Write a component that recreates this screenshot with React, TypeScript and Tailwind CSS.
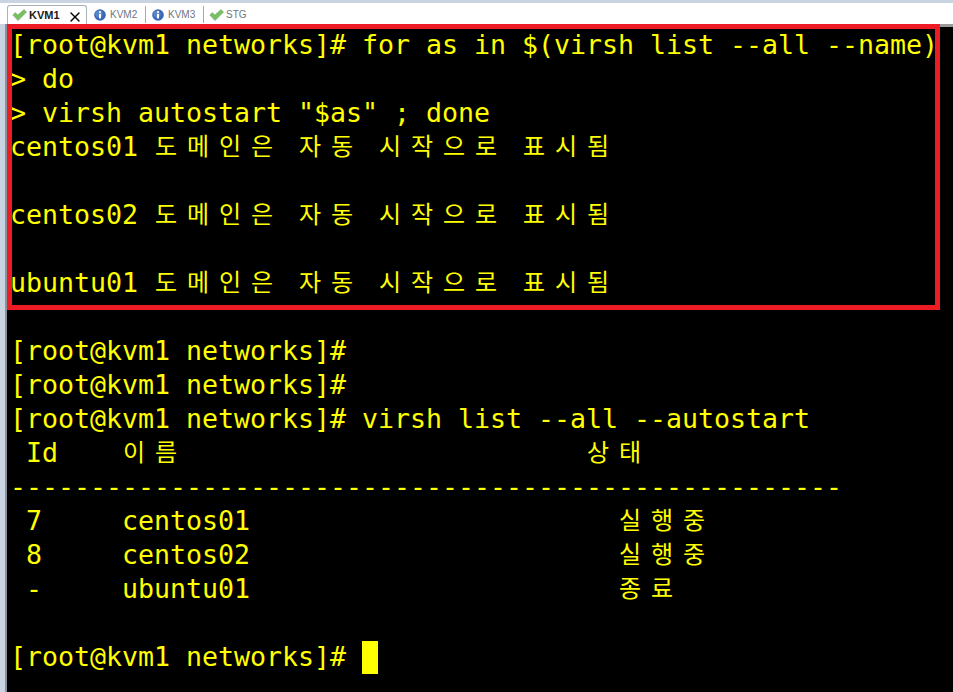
import React from 'react';
import { X } from 'lucide-react';

const TERM_FONT = "font-['DejaVu_Sans_Mono','Noto_Sans_CJK_KR',monospace]";

const LINES = [
  '[root@kvm1 networks]# for as in $(virsh list --all --name)',
  '> do',
  '> virsh autostart "$as" ; done',
  'centos01 도메인은 자동 시작으로 표시됨',
  '',
  'centos02 도메인은 자동 시작으로 표시됨',
  '',
  'ubuntu01 도메인은 자동 시작으로 표시됨',
  '',
  '[root@kvm1 networks]#',
  '[root@kvm1 networks]#',
  '[root@kvm1 networks]# virsh list --all --autostart',
  ' Id    이름                         상태',
  '----------------------------------------------------',
  ' 7     centos01                       실행중',
  ' 8     centos02                       실행중',
  ' -     ubuntu01                       종료',
  '',
];

function Cells({ text }: { text: string }) {
  return (
    <>
      {Array.from(text).map((ch, i) =>
        /[가-힣]/.test(ch) ? (
          <span
            key={i}
            className="w-[32px] shrink-0 pl-[1px] -translate-y-[2px] font-['Noto_Sans_CJK_KR',sans-serif] text-[24px] leading-[34px]"
          >
            {ch}
          </span>
        ) : (
          <span key={i} className="w-[16px] shrink-0">
            {ch}
          </span>
        ),
      )}
    </>
  );
}

function Check() {
  return (
    <svg width="15" height="12" viewBox="0 0 15 12" className="shrink-0">
      <path d="M0.8 6 L3.4 3.6 L5.8 6 L12 0.6 L14.6 3 L6 11.6 Z" fill="#74c25a" stroke="#93a596" strokeWidth="0.7" />
    </svg>
  );
}

function Info() {
  return (
    <svg width="12" height="12" viewBox="0 0 12 12" className="shrink-0">
      <circle cx="6" cy="6" r="5.8" fill="#3a68b4" />
      <circle cx="5" cy="5" r="3.6" fill="#6f9bd8" opacity="0.6" />
      <rect x="5" y="2.2" width="2" height="1.6" fill="#fff" />
      <rect x="5" y="4.8" width="2" height="4.6" fill="#fff" />
    </svg>
  );
}

export default function App() {
  return (
    <div className="w-[953px] h-[692px] overflow-hidden bg-[#c9d3e2] flex flex-col font-['Liberation_Sans',sans-serif]">
      <div className="h-[24px] pt-[3px] shrink-0 flex flex-col">
        <div className="flex-1 bg-white flex items-end pl-[7px]">
          <div className="w-[80px] h-[19px] shrink-0 bg-white border border-b-0 border-[#a9b1bd] rounded-t-[3px] flex items-center gap-[2px] pl-[4px] pr-[3px] text-[11px] font-bold text-[#1a1a1a]">
            <Check />
            <span className="flex-1">KVM1</span>
            <X size={16} strokeWidth={2} className="text-black translate-y-[2px]" />
          </div>
          <div className="flex items-center h-[19px] text-[10px] text-[#6f7680]">
            <div className="w-[59px] h-[17px] flex items-center gap-[4px] pl-[7px] border-r border-[#a8a8a8]">
              <Info />
              <span>KVM2</span>
            </div>
            <div className="w-[58px] h-[17px] flex items-center gap-[4px] pl-[6px] border-r border-[#a8a8a8]">
              <Info />
              <span>KVM3</span>
            </div>
            <div className="h-[17px] flex items-center gap-[2px] pl-[5px]">
              <Check />
              <span>STG</span>
            </div>
          </div>
        </div>
      </div>
      <div className="flex-1 flex min-h-0">
        <div className="w-[2px] ml-[5px] shrink-0 bg-[#8a929c]" />
        <div className="flex-1 flex flex-col">
          <div className="h-[3px] shrink-0 bg-[#9a9a9a]" />
          <div className={`relative flex-1 bg-black text-[#ffff00] text-[26.6px] pl-[3px] pt-[1px] ${TERM_FONT}`}>
            {LINES.map((line, i) => (
              <div key={i} className="h-[34px] flex items-center whitespace-pre">
                <Cells text={line} />
              </div>
            ))}
            <div className="h-[34px] flex items-center whitespace-pre">
              <Cells text="[root@kvm1 networks]# " />
              <span className="w-[16px] h-[33px] bg-[#ffff00]" />
            </div>
            <div className="absolute left-0 -top-[3px] w-[933px] h-[286px] border-[5px] border-[#ed1c24]" />
          </div>
        </div>
      </div>
    </div>
  );
}
